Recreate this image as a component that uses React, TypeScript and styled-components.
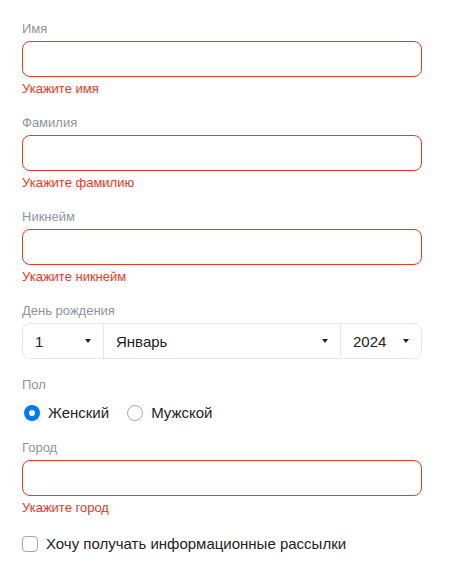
import { createGlobalStyle, styled } from "styled-components";

const GlobalStyle = createGlobalStyle`
  body {
    margin: 0;
    background: #fff;
    font-family: "Liberation Sans", Arial, sans-serif;
    color: #222;
  }
`;

const Form = styled.form`
  width: 400px;
  padding: 21px 22px;
  display: flex;
  flex-direction: column;
  gap: 18px;
`;

const Field = styled.div`
  display: flex;
  flex-direction: column;
  gap: 4px;
`;

const Label = styled.span`
  font-size: 13px;
  line-height: 16px;
  color: #8d949c;
`;

const Input = styled.input<{ $invalid?: boolean }>`
  box-sizing: border-box;
  height: 36px;
  width: 100%;
  padding: 0 12px;
  border-radius: 8px;
  border: 1px solid ${(p) => (p.$invalid ? "#e8391a" : "#dce1e6")};
  font: inherit;
  font-size: 15px;
  outline: none;
`;

const Error = styled.span`
  font-size: 13px;
  line-height: 16px;
  color: #e8391a;
`;

const SelectGroup = styled.div`
  display: grid;
  grid-template-columns: 80px 1fr 81px;
  height: 36px;
  box-sizing: border-box;
  border: 1px solid #e4e6ea;
  border-radius: 8px;
`;

const Select = styled.div`
  display: flex;
  align-items: center;
  justify-content: space-between;
  padding: 0 12px;
  font-size: 15px;
  color: #222;
  & + & {
    border-left: 1px solid #e4e6ea;
  }
`;

const Caret = styled.span`
  width: 0;
  height: 0;
  border-left: 3.5px solid transparent;
  border-right: 3.5px solid transparent;
  border-top: 4px solid #222;
`;

const RadioRow = styled.div`
  display: flex;
  gap: 16px;
  margin: 6px 0 -1px;
`;

const Choice = styled.label`
  display: flex;
  align-items: center;
  gap: 8px;
  font-size: 15px;
  line-height: 20px;
  color: #222;
`;

const Radio = styled.span<{ $checked?: boolean }>`
  box-sizing: border-box;
  width: 16px;
  height: 16px;
  margin-left: 2px;
  border-radius: 50%;
  border: ${(p) => (p.$checked ? "5px solid #0077ff" : "1px solid #a3a8ad")};
  background: #fff;
`;

const CheckRow = styled.label`
  display: flex;
  align-items: center;
  gap: 8px;
  font-size: 15px;
  line-height: 20px;
  color: #222;
`;

const Checkbox = styled.span`
  box-sizing: border-box;
  width: 16px;
  height: 16px;
  border-radius: 4px;
  border: 1px solid #a3a8ad;
`;

function TextField({ label, error }: { label: string; error: string }) {
  return (
    <Field>
      <Label>{label}</Label>
      <Input $invalid />
      <Error>{error}</Error>
    </Field>
  );
}

export default function App() {
  return (
    <>
      <GlobalStyle />
      <Form onSubmit={(e) => e.preventDefault()}>
        <TextField label="Имя" error="Укажите имя" />
        <TextField label="Фамилия" error="Укажите фамилию" />
        <TextField label="Никнейм" error="Укажите никнейм" />
        <Field>
          <Label>День рождения</Label>
          <SelectGroup>
            <Select>
              1<Caret />
            </Select>
            <Select>
              Январь<Caret />
            </Select>
            <Select>
              2024<Caret />
            </Select>
          </SelectGroup>
        </Field>
        <Field>
          <Label>Пол</Label>
          <RadioRow>
            <Choice>
              <Radio $checked />
              Женский
            </Choice>
            <Choice>
              <Radio />
              Мужской
            </Choice>
          </RadioRow>
        </Field>
        <TextField label="Город" error="Укажите город" />
        <CheckRow>
          <Checkbox />
          Хочу получать информационные рассылки
        </CheckRow>
      </Form>
    </>
  );
}
